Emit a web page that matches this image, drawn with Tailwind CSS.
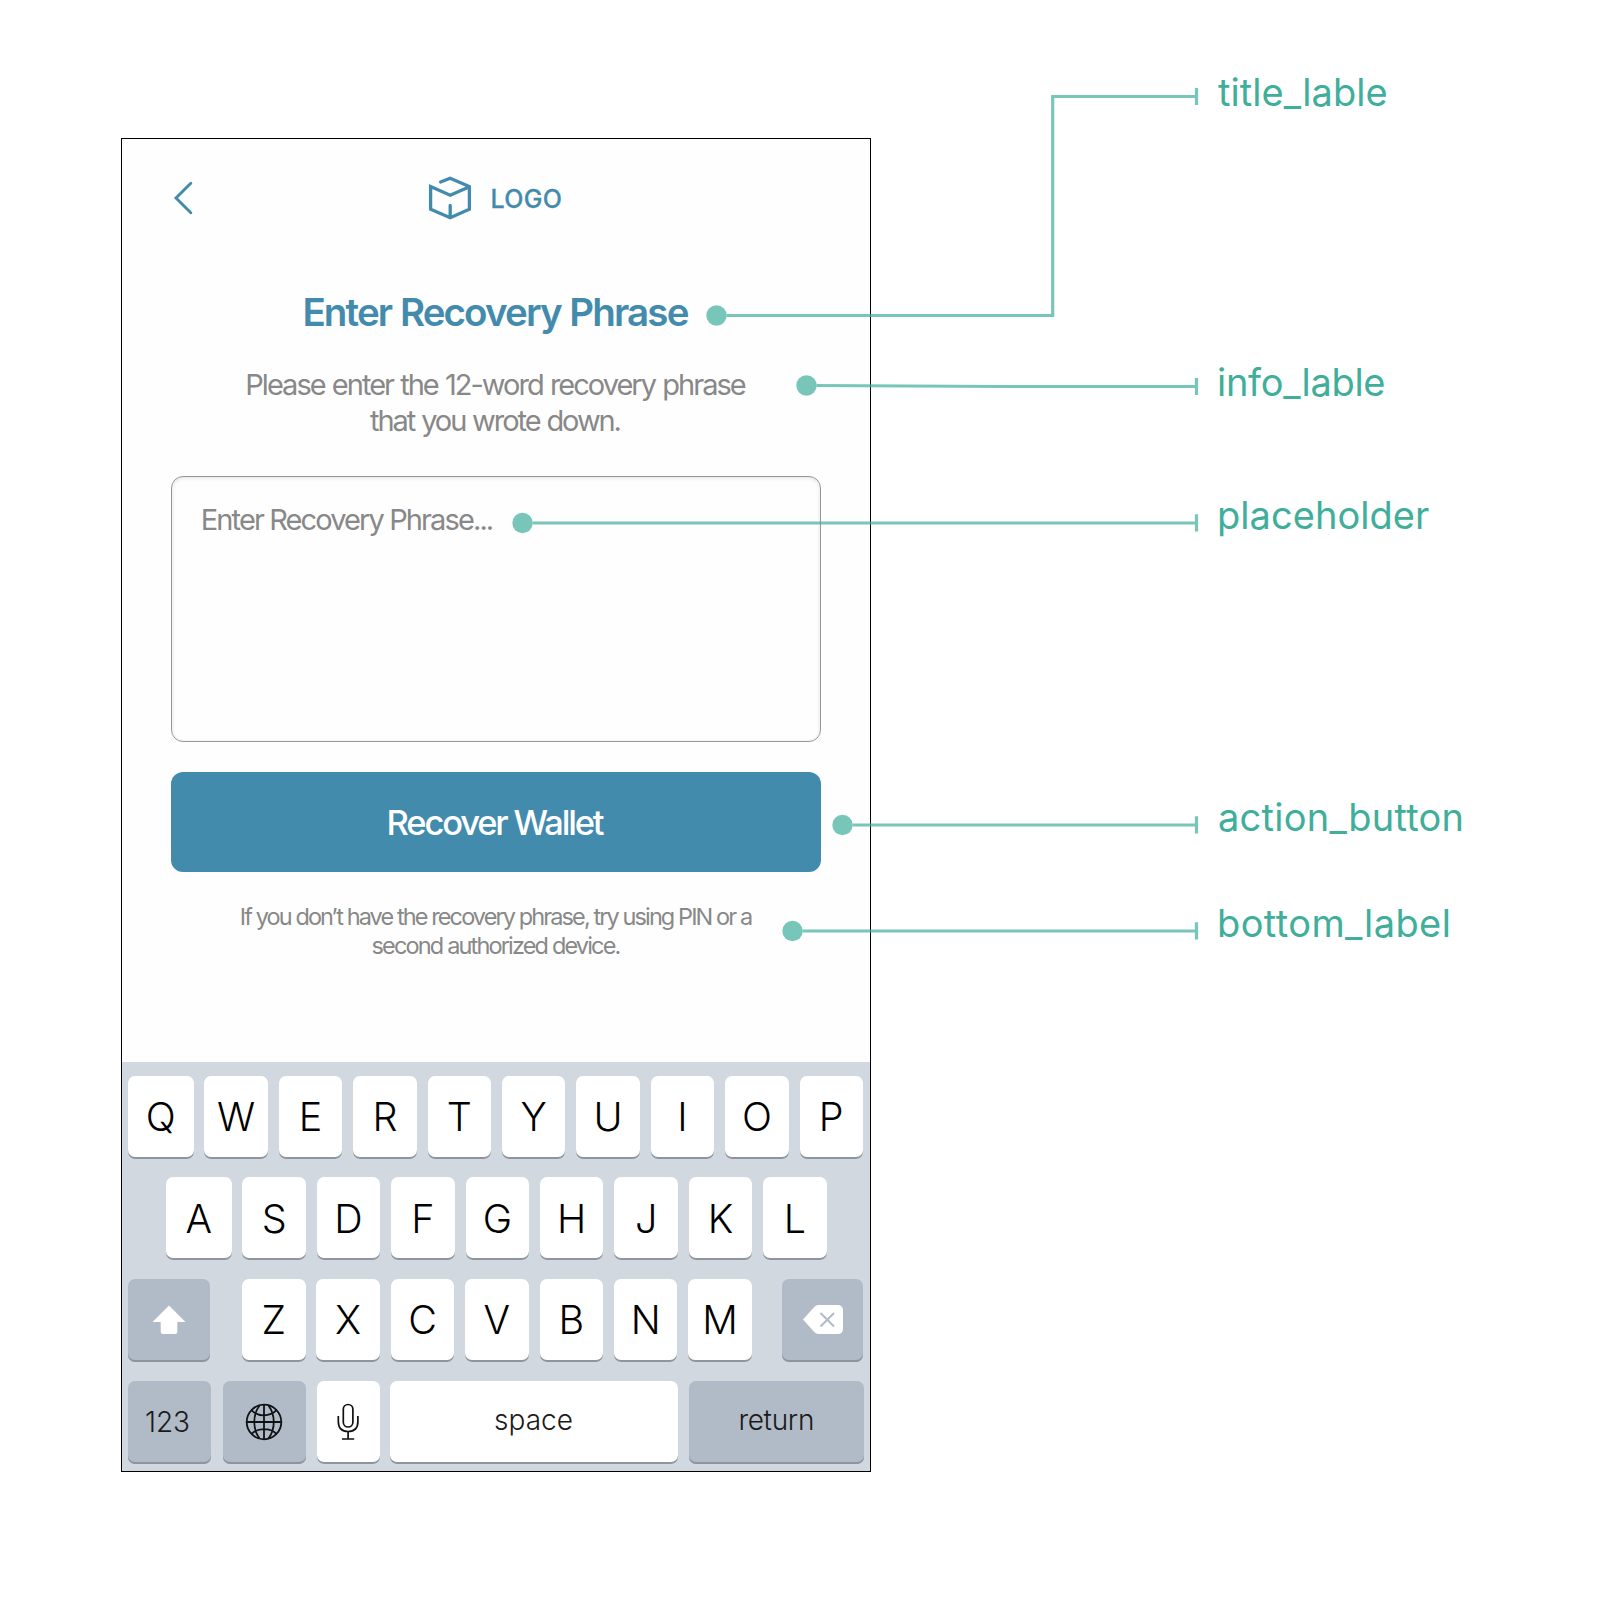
<!DOCTYPE html>
<html lang="en">
<head>
<meta charset="utf-8">
<title>Recovery Phrase</title>
<script src="https://cdn.jsdelivr.net/npm/@tailwindcss/browser@4"></script>
</head>
<body class="bg-white font-['Inter',sans-serif]">
<div class="relative flex h-[1605px] w-[1607px] items-start overflow-hidden">

  <!-- Phone screen -->
  <main class="mt-[138px] ml-[121px] flex h-[1334px] w-[750px] shrink-0 flex-col border border-black bg-[#fefefe]">
    <header class="flex h-[118px] items-center text-[#438bad]">
      <svg class="ml-[49.500px] h-10 w-6" viewBox="0 0 24 40" fill="none" stroke="currentColor" stroke-width="2.9" stroke-linecap="round"><path d="M18.8 5.3 4 20l14.800 14.700"/></svg>
      <svg class="mb-[3px] ml-[231.500px] h-[46px] w-[46px]" viewBox="427 174 46 46" fill="none" stroke="currentColor" stroke-width="3.300" stroke-linecap="round"><path d="M440.600 182 450.200 178.200 469.400 186.500V209.200L450.200 217.700 430.600 209.200V186.600L450.200 195.300 469 187M450.200 205.500V217"/></svg>
      <span class="mt-[3px] ml-[17.5px] text-[25px] font-medium tracking-[0.300px] [-webkit-text-stroke:0.3px_#438bad]">LOGO</span>
    </header>

    <h1 class="mt-[31px] pr-[2px] text-center text-[38.500px] leading-[48px] font-semibold tracking-[-1.860px] text-[#438bad] [word-spacing:0.8px]">Enter Recovery Phrase</h1>
    <p class="mt-[31px] pr-[2px] text-center text-[29px] leading-[36px] text-[#888]">
      <span class="block tracking-[-1.980px] [word-spacing:1px]">Please enter the 12-word recovery phrase</span>
      <span class="block tracking-[-2.060px] [word-spacing:0.8px]">that you wrote down.</span>
    </p>
    <div class="mx-[49px] mt-[37px] h-[266px] rounded-xl border border-[#979797] bg-[#fefefe] pt-[25px] pl-[28.800px] text-[29px] leading-[36px] tracking-[-1.890px] text-[#888] shadow-[inset_0_1px_4px_rgba(0,0,0,0.12)]">Enter Recovery Phrase...</div>
    <button class="mx-[49px] mt-[30px] h-[100px] shrink-0 rounded-xl bg-[#438bad] pt-[2px] pr-[3px] text-[34.500px] font-medium tracking-[-2.150px] text-white">Recover Wallet</button>
    <p class="mt-[30px] pr-[1px] text-center text-[23.500px] leading-[29px] text-[#888]">
      <span class="block tracking-[-1.900px]">If you don’t have the recovery phrase, try using PIN or a</span>
      <span class="block tracking-[-1.84px]">second authorized device.</span>
    </p>

    <!-- Keyboard -->
    <section id="keyboard" class="mt-auto flex h-[409px] shrink-0 flex-col gap-[18.300px] bg-[#d2d8e0] pt-[14px] pl-[6px] text-[39.500px] font-light text-black">
      <div class="flex h-[83px] gap-[10.900px]" data-keys="QWERTYUIOP"></div>
      <div class="flex h-[83px] gap-[10.900px] pl-[38px]" data-keys="ASDFGHJKL"></div>
      <div class="flex h-[83px]">
        <div class="flex w-[81.500px] items-center justify-center rounded-[7px] bg-[#b1bbc8] shadow-[inset_0_-2px_0_#8e959f]">
          <svg class="h-8 w-9" viewBox="0 0 36 32" fill="#fff"><path d="M18 1.500 34.500 18H26.300V27.500Q26.300 30 23.800 30H12.200Q9.700 30 9.700 27.500V18H1.500Z"/></svg>
        </div>
        <div class="ml-[32.500px] flex gap-[10.900px]" data-keys="ZXCVBNM"></div>
        <div class="ml-[30px] flex w-[81.500px] items-center justify-center rounded-[7px] bg-[#b1bbc8] shadow-[inset_0_-2px_0_#8e959f]">
          <svg class="h-8 w-[42px]" viewBox="0 0 42 32"><path d="M1 15.500 12.500 2.800Q14 1 16.500 1H35.500Q41 1 41 6.500V24.500Q41 30 35.500 30H16.500Q14 30 12.500 28.200Z" fill="#fff"/><path d="M18.500 9 32 22.500M32 9 18.500 22.500" stroke="#b1bbc8" stroke-width="2" fill="none"/></svg>
        </div>
      </div>
      <div class="mt-[0.700px] flex h-[83px] text-[28px]">
        <div class="flex w-[83px] items-center justify-center rounded-[7px] bg-[#b1bbc8] pr-1 text-[#1a1a1a] shadow-[inset_0_-2px_0_#8e959f]">123</div>
        <div class="ml-[12px] flex w-[82.500px] items-center justify-center rounded-[7px] bg-[#b1bbc8] pb-px shadow-[inset_0_-2px_0_#8e959f]">
          <svg class="h-[38px] w-[38px]" viewBox="0 0 38 38" fill="none" stroke="#111" stroke-width="1.800"><circle cx="19" cy="19" r="17.300"/><path d="M19 1.700V36.300M1.700 19H36.300M14.500 2.500C7.500 12 7.500 26 14.500 35.500M23.500 2.500C30.500 12 30.500 26 23.500 35.500M6.500 7.200C13 14 25 14 31.500 7.200M6.500 30.800C13 24.500 25 24.500 31.500 30.800"/></svg>
        </div>
        <div class="ml-[11px] flex w-[63.500px] items-center justify-center rounded-[7px] bg-white pb-px shadow-[inset_0_-2px_0_#8e959f]">
          <svg class="h-[38px] w-6" viewBox="0 0 24 38" fill="none" stroke="#111" stroke-width="1.700"><rect x="7.300" y="1.500" width="9.600" height="22.500" rx="4.800"/><path d="M2.300 13V18.500C2.300 25.500 6 28.500 12.100 28.500S21.900 25.500 21.900 18.500V13M12.100 28.500V35.700M6 36H18.200"/></svg>
        </div>
        <div class="ml-[9.500px] flex w-[288px] items-center justify-center rounded-[7px] bg-white pb-[5px] text-[#1a1a1a] shadow-[inset_0_-2px_0_#8e959f]">space</div>
        <div class="ml-[11px] flex w-[175.500px] items-center justify-center rounded-[7px] bg-[#b1bbc8] pb-[5px] tracking-[-0.300px] text-[#1a1a1a] shadow-[inset_0_-2px_0_#8e959f]">return</div>
      </div>
    </section>
  </main>

  <!-- Callout names -->
  <aside class="ml-[347px] flex flex-col pt-[68px] text-[38px] leading-[48px] font-normal text-[#3fae9b]">
    <span class="tracking-[0.050px]">title_lable</span>
    <span class="mt-[242px] -ml-px tracking-[-0.300px]">info_lable</span>
    <span class="mt-[85px] -ml-px tracking-[0.050px]">placeholder</span>
    <span class="mt-[254px] tracking-[0.250px]">action_button</span>
    <span class="mt-[58px] -ml-px tracking-[0.400px]">bottom_label</span>
  </aside>

  <!-- Connector lines -->
  <svg class="pointer-events-none absolute inset-0 h-[1605px] w-[1607px]" viewBox="0 0 1607 1605">
    <g fill="none" stroke="#3fae9b" stroke-opacity="0.7" stroke-width="3.200">
      <path d="M726.500 315.500H1052.700V96.500H1195M1196.500 88V105"/>
      <path d="M816.500 385.500 1000 386.500H1195M1196.500 378V395"/>
      <path d="M532.500 523H1195M1196.500 514.300V531.500"/>
      <path d="M852.500 825H1195M1196.500 816.300V833.500"/>
      <path d="M802.500 931H1195M1196.500 922.300V939.500"/>
    </g>
    <g fill="#78c6b9">
      <circle cx="716.500" cy="315.500" r="10.200"/>
      <circle cx="806.500" cy="385.500" r="10.200"/>
      <circle cx="522.500" cy="523" r="10.200"/>
      <circle cx="842.500" cy="825" r="10.200"/>
      <circle cx="792.500" cy="931" r="10.200"/>
    </g>
  </svg>
</div>

<script>
  document.querySelectorAll('[data-keys]').forEach(function (row) {
    [...row.dataset.keys].forEach(function (letter) {
      const key = document.createElement('div');
      const wide = letter === 'Q' || letter === 'A';
      key.className = (wide ? 'w-[65.500px]' : 'w-[63.500px]') + ' flex items-center justify-center rounded-[7px] bg-white pt-px shadow-[inset_0_-2px_0_#8e959f]';
      key.textContent = letter;
      row.append(key);
    });
  });
</script>
</body>
</html>
